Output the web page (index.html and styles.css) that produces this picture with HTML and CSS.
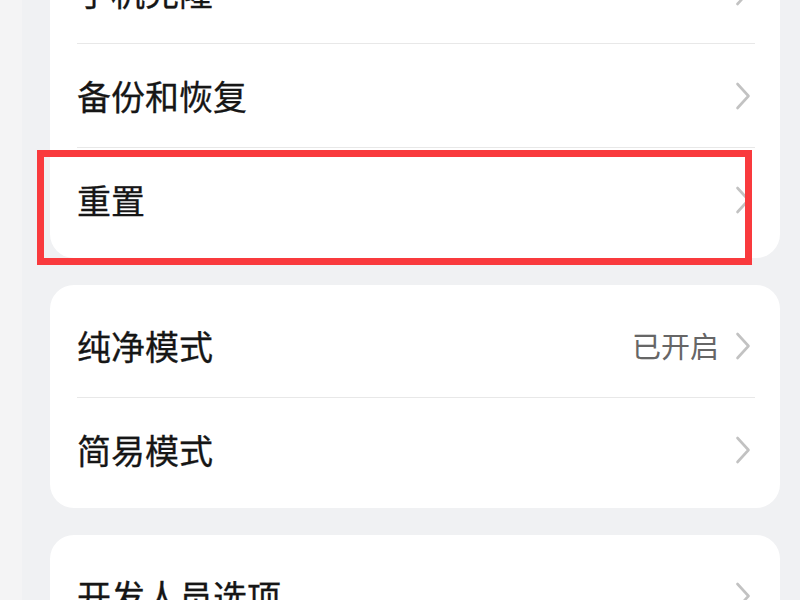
FILE: index.html
```html
<!DOCTYPE html>
<html lang="zh-CN">
<head>
<meta charset="utf-8">
<title>设置</title>
<link rel="stylesheet" href="styles.css">
</head>
<body>
<div class="page">
  <div class="list">
    <section class="card card-first">
      <div class="row"><span class="label">手机克隆</span><span class="end"><svg class="chev" viewBox="0 0 16 28" width="16" height="28"><path d="M2.5 2 L13.5 14 L2.5 26"/></svg></span></div>
      <div class="row"><span class="label">备份和恢复</span><span class="end"><svg class="chev" viewBox="0 0 16 28" width="16" height="28"><path d="M2.5 2 L13.5 14 L2.5 26"/></svg></span></div>
      <div class="row"><span class="label">重置</span><span class="end"><svg class="chev" viewBox="0 0 16 28" width="16" height="28"><path d="M2.5 2 L13.5 14 L2.5 26"/></svg></span></div>
    </section>
    <section class="card">
      <div class="row"><span class="label">纯净模式</span><span class="end"><span class="value">已开启</span><svg class="chev" viewBox="0 0 16 28" width="16" height="28"><path d="M2.5 2 L13.5 14 L2.5 26"/></svg></span></div>
      <div class="row"><span class="label">简易模式</span><span class="end"><svg class="chev" viewBox="0 0 16 28" width="16" height="28"><path d="M2.5 2 L13.5 14 L2.5 26"/></svg></span></div>
    </section>
    <section class="card">
      <div class="row"><span class="label">开发人员选项</span><span class="end"><svg class="chev" viewBox="0 0 16 28" width="16" height="28"><path d="M2.5 2 L13.5 14 L2.5 26"/></svg></span></div>
    </section>
  </div>
  <div class="highlight"></div>
</div>
</body>
</html>
```

FILE: styles.css
```css
html, body {
  margin: 0;
  padding: 0;
}
body {
  width: 800px;
  height: 600px;
  overflow: hidden;
  background: linear-gradient(to right, #f4f4f5 0, #f4f4f5 22px, #f0f1f3 22px, #f0f1f3 100%);
  font-family: "Noto Sans CJK SC", "Noto Sans", sans-serif;
}
.page {
  position: relative;
  width: 800px;
  height: 600px;
  overflow: hidden;
}
.list {
  display: flex;
  flex-direction: column;
  gap: 27px;
  margin: -69px 20px 0 50px;
}
.card {
  background: #ffffff;
  border-radius: 24px;
  padding: 9px 0 6px;
}
.row {
  display: flex;
  align-items: center;
  justify-content: space-between;
  height: 104px;
  box-sizing: border-box;
  margin: 0 25px 0 27px;
  border-bottom: 1px solid #e8e8e8;
}
.row:last-child {
  border-bottom: none;
}
.label {
  font-size: 34px;
  font-weight: 400;
  color: #161616;
  line-height: 1;
  letter-spacing: 0;
  -webkit-text-stroke: 0.3px #161616;
}
.end {
  display: flex;
  align-items: center;
  gap: 16px;
  margin-right: 4px;
}
.value {
  font-size: 29px;
  color: #666666;
  line-height: 1;
}
.chev {
  display: block;
}
.chev path {
  fill: none;
  stroke: #c2c2c2;
  stroke-width: 2.6;
  stroke-linecap: round;
  stroke-linejoin: round;
}
.highlight {
  position: absolute;
  left: 37px;
  top: 150px;
  width: 715px;
  height: 115px;
  box-sizing: border-box;
  border: 7px solid #f93a3d;
}
```
